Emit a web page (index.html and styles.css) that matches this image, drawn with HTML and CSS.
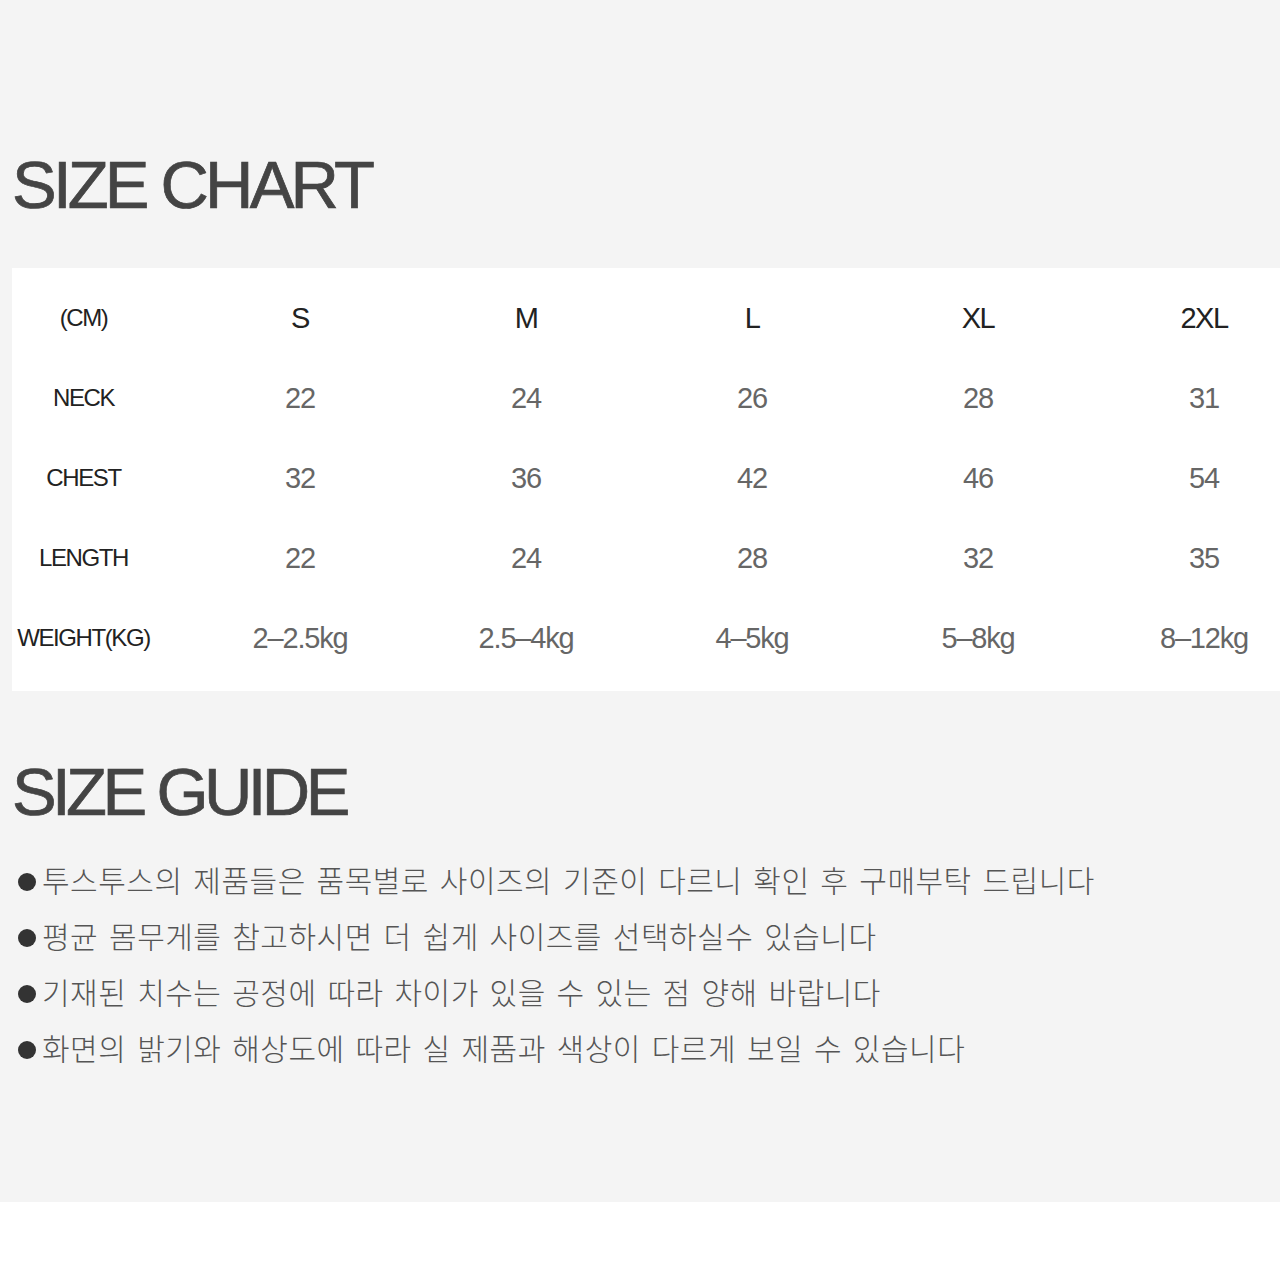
FILE: index.html
```html
<!DOCTYPE html>
<html lang="ko">
<head>
<meta charset="UTF-8">
<meta name="viewport" content="width=device-width, initial-scale=1.0">
<title>Size Chart</title>
<link rel="stylesheet" href="styles.css">
</head>
<body>
<div class="page">
  <h1 class="title">SIZE CHART</h1>
  <div class="chart">
    <div class="row head">
      <div class="label">(CM)</div>
      <div class="cell">S</div>
      <div class="cell">M</div>
      <div class="cell">L</div>
      <div class="cell">XL</div>
      <div class="cell">2XL</div>
    </div>
    <div class="row">
      <div class="label">NECK</div>
      <div class="cell">22</div>
      <div class="cell">24</div>
      <div class="cell">26</div>
      <div class="cell">28</div>
      <div class="cell">31</div>
    </div>
    <div class="row">
      <div class="label">CHEST</div>
      <div class="cell">32</div>
      <div class="cell">36</div>
      <div class="cell">42</div>
      <div class="cell">46</div>
      <div class="cell">54</div>
    </div>
    <div class="row">
      <div class="label">LENGTH</div>
      <div class="cell">22</div>
      <div class="cell">24</div>
      <div class="cell">28</div>
      <div class="cell">32</div>
      <div class="cell">35</div>
    </div>
    <div class="row">
      <div class="label">WEIGHT(KG)</div>
      <div class="cell">2–2.5kg</div>
      <div class="cell">2.5–4kg</div>
      <div class="cell">4–5kg</div>
      <div class="cell">5–8kg</div>
      <div class="cell">8–12kg</div>
    </div>
  </div>

  <h1 class="title guide">SIZE GUIDE</h1>
  <ul class="notes">
    <li>투스투스의 제품들은 품목별로 사이즈의 기준이 다르니 확인 후 구매부탁 드립니다</li>
    <li>평균 몸무게를 참고하시면 더 쉽게 사이즈를 선택하실수 있습니다</li>
    <li>기재된 치수는 공정에 따라 차이가 있을 수 있는 점 양해 바랍니다</li>
    <li>화면의 밝기와 해상도에 따라 실 제품과 색상이 다르게 보일 수 있습니다</li>
  </ul>
</div>
</body>
</html>
```

FILE: styles.css
```css
body {
  margin: 0;
  background-color: #fff;
  font-family: 'Liberation Sans', Arial, sans-serif;
}
.page {
  background-color: #f4f4f4;
  padding: 151px 0 124px 12px;
}
.title {
  margin: 0;
  font-size: 67px;
  line-height: 67px;
  font-weight: normal;
  letter-spacing: -3.8px;
  color: #444;
  -webkit-text-stroke: 0.7px #444;
}
.title.guide {
  margin-top: 67px;
  letter-spacing: -4.6px;
}
.chart {
  margin-top: 50px;
  background-color: #fff;
  padding: 10px 0 13px 0;
  overflow: hidden;
}
.row {
  display: grid;
  grid-template-columns: 175px repeat(5, 226px);
  height: 80px;
  align-items: center;
}
.label {
  padding-right: 32px;
  text-align: center;
  font-size: 24px;
  letter-spacing: -1.4px;
  color: #222;
}
.cell {
  text-align: center;
  font-size: 29px;
  letter-spacing: -1.2px;
  color: #666;
}
.head .cell {
  color: #222;
  letter-spacing: -1.5px;
}
.notes {
  list-style: none;
  margin: 29px 0 0 0;
  padding: 0 0 0 6px;
  font-family: 'Liberation Sans', 'Noto Sans CJK KR', sans-serif;
  font-size: 30px;
  font-weight: 300;
  line-height: 56px;
  letter-spacing: 0.5px;
  word-spacing: 2px;
  color: #555;
}
.notes li {
  display: flex;
  align-items: center;
}
.notes li::before {
  content: "";
  width: 18px;
  height: 18px;
  border-radius: 50%;
  background-color: #333;
  margin-right: 6px;
  flex-shrink: 0;
}
```
